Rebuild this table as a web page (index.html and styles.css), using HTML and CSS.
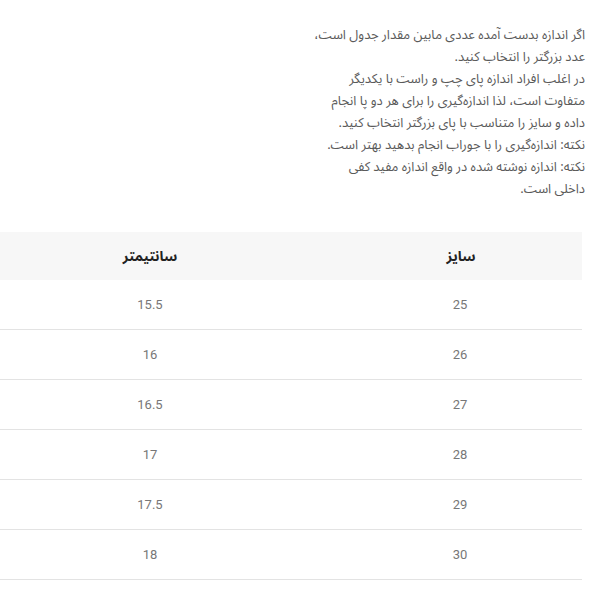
FILE: index.html
```html
<!DOCTYPE html>
<html lang="fa" dir="rtl">
<head>
<meta charset="utf-8">
<link rel="stylesheet" href="styles.css">
</head>
<body>
<div class="page">
  <div class="note">
    <p>اگر اندازه بدست آمده عددی مابین مقدار جدول است،<br>عدد بزرگتر را انتخاب کنید.<br>در اغلب افراد اندازه پای چپ و راست با یکدیگر<br>متفاوت است، لذا اندازه‌گیری را برای هر دو پا انجام<br>داده و سایز را متناسب با پای بزرگتر انتخاب کنید.<br>نکته: اندازه‌گیری را با جوراب انجام بدهید بهتر است.<br>نکته: اندازه نوشته شده در واقع اندازه مفید کفی<br>داخلی است.</p>
  </div>
  <table class="sizes">
    <thead>
      <tr><th class="c-size">سایز</th><th class="c-cm">سانتیمتر</th></tr>
    </thead>
    <tbody>
      <tr><td class="c-size">25</td><td class="c-cm">15.5</td></tr>
      <tr><td class="c-size">26</td><td class="c-cm">16</td></tr>
      <tr><td class="c-size">27</td><td class="c-cm">16.5</td></tr>
      <tr><td class="c-size">28</td><td class="c-cm">17</td></tr>
      <tr><td class="c-size">29</td><td class="c-cm">17.5</td></tr>
      <tr><td class="c-size">30</td><td class="c-cm">18</td></tr>
    </tbody>
  </table>
</div>
</body>
</html>
```
FILE: styles.css
```css
html, body {
  margin: 0;
  padding: 0;
  background: #fff;
}
.page {
  padding-top: 24px;
  padding-right: 18px;
  font-family: "Noto Sans Arabic", "Noto Naskh Arabic", "DejaVu Sans", sans-serif;
}
.note {
  margin-right: -3px;
}
.note p {
  margin: 0;
  font-size: 13px;
  line-height: 22px;
  color: #5a5a5a;
  text-align: right;
}
.sizes {
  margin-top: 32px;
  width: 582px;
  border-collapse: collapse;
  table-layout: fixed;
}
.sizes th {
  height: 48px;
  padding: 0;
  background: #f7f7f7;
  font-size: 14px;
  font-weight: bold;
  color: #222;
}
.sizes td {
  height: 49px;
  padding: 0;
  border-bottom: 1px solid #e3e3e3;
  font-family: Roboto, "Liberation Sans", sans-serif;
  font-size: 13px;
  color: #777;
}
.sizes .c-size {
  width: 244px;
  padding-left: 38px;
  text-align: center;
}
.sizes th.c-size {
  padding-left: 40px;
  width: 242px;
}
.sizes .c-cm {
  width: 300px;
  text-align: center;
}
```
